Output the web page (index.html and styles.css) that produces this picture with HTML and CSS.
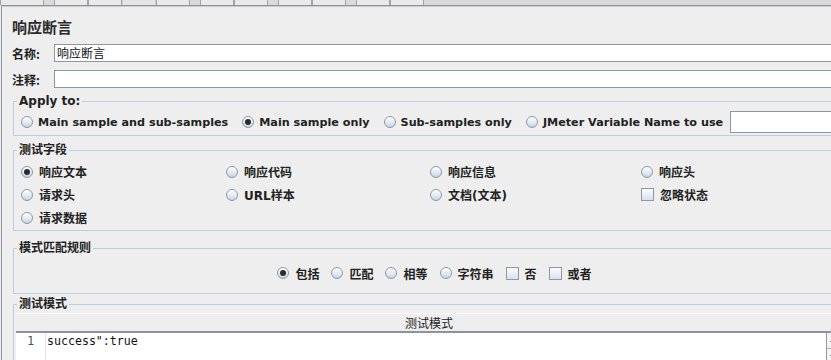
FILE: index.html
```html
<!DOCTYPE html>
<html lang="zh-CN">
<head>
    <meta charset="UTF-8">
    <title>响应断言</title>
    <link rel="stylesheet" href="styles.css">
</head>
<body>
    <div class="toolbar">
        <span class="tb-btn" style="width: 42px"></span>
        <span class="tb-gap"></span>
        <span class="tb-btn"></span><span class="tb-btn"></span><span class="tb-btn light"></span><span class="tb-btn"></span>
        <span class="tb-gap"></span>
        <span class="tb-btn"></span><span class="tb-btn"></span>
        <span class="tb-gap"></span>
        <span class="tb-btn"></span><span class="tb-btn"></span>
        <span class="tb-gap"></span>
        <span class="tb-btn"></span><span class="tb-btn"></span>
    </div>

    <div class="panel">
        <h1 class="title">响应断言</h1>

        <div class="field-row">
            <label class="field-label">名称:</label>
            <div class="text-input">响应断言</div>
        </div>
        <div class="field-row second">
            <label class="field-label">注释:</label>
            <div class="text-input"></div>
        </div>

        <fieldset class="group apply">
            <legend>Apply to:</legend>
            <div class="apply-row">
                <span class="option"><span class="radio"></span>Main sample and sub-samples</span>
                <span class="option"><span class="radio on"></span>Main sample only</span>
                <span class="option"><span class="radio"></span>Sub-samples only</span>
                <span class="option"><span class="radio"></span>JMeter Variable Name to use</span>
                <div class="text-input var-input"></div>
            </div>
        </fieldset>

        <fieldset class="group fields">
            <legend>测试字段</legend>
            <div class="field-grid">
                <span class="option"><span class="radio on"></span>响应文本</span>
                <span class="option"><span class="radio"></span>响应代码</span>
                <span class="option"><span class="radio"></span>响应信息</span>
                <span class="option"><span class="radio"></span>响应头</span>
                <span class="option"><span class="radio"></span>请求头</span>
                <span class="option"><span class="radio"></span>URL样本</span>
                <span class="option"><span class="radio"></span>文档(文本)</span>
                <span class="option"><span class="check"></span>忽略状态</span>
                <span class="option"><span class="radio"></span>请求数据</span>
            </div>
        </fieldset>

        <fieldset class="group rules">
            <legend>模式匹配规则</legend>
            <div class="rule-row">
                <span class="option"><span class="radio on"></span>包括</span>
                <span class="option"><span class="radio"></span>匹配</span>
                <span class="option"><span class="radio"></span>相等</span>
                <span class="option"><span class="radio"></span>字符串</span>
                <span class="option"><span class="check"></span>否</span>
                <span class="option"><span class="check"></span>或者</span>
            </div>
        </fieldset>

        <fieldset class="group patterns">
            <legend>测试模式</legend>
            <div class="table-head">测试模式</div>
            <div class="editor">
                <div class="gutter">1</div>
                <div class="code">success":true</div>
                <div class="scrollbar">
                    <span class="arrow up"></span>
                    <span class="arrow down"></span>
                </div>
            </div>
        </fieldset>
    </div>
</body>
</html>
```

FILE: styles.css
```css
body {
    margin: 0;
    width: 831px;
    height: 360px;
    overflow: hidden;
    background: #eeeeee;
    color: #222;
    font-family: "DejaVu Sans", "Noto Sans CJK SC", sans-serif;
    font-size: 12px;
}

/* strip of toolbar buttons cut off at the top */
.toolbar {
    display: flex;
    height: 5px;
    background: #d9d9d9;
    overflow: hidden;
}

.tb-btn {
    width: 32px;
    height: 8px;
    margin-top: -4px;
    border: 1px solid #a3a3a3;
    background: #e9e9e9;
}

.tb-btn.light {
    border-color: #d0d0d0;
    background: #e4e4e4;
}

.tb-gap {
    width: 10px;
}

.panel {
    width: 830px;
    margin-left: 1px;
    padding: 11px 0 0 10px;
    border-top: 1px solid #8a93a2;
    border-left: 1px solid #8a93a2;
    box-shadow: inset 0 1px 0 #c9cdd3;
}

.title {
    margin: 0;
    font-family: "Noto Sans CJK SC", sans-serif;
    font-size: 15px;
    line-height: 20px;
    font-weight: bold;
    color: #2a2a2a;
}

.field-row {
    display: flex;
    align-items: center;
    margin-top: 7px;
}

.field-row.second {
    margin-top: 8px;
}

.field-label {
    width: 42px;
    font-family: "Noto Sans CJK SC", sans-serif;
    font-weight: bold;
    font-size: 12px;
}

.text-input {
    flex: 1;
    height: 16px;
    padding-left: 2px;
    border: 1px solid #8d96a5;
    background: #fff;
    font-family: "Noto Sans CJK SC", sans-serif;
    font-size: 12px;
    line-height: 16px;
    color: #111;
}

.group {
    margin: 0 0 0 1px;
    padding: 0 0 0 7px;
    border: 1px solid #b9cde4;
    border-right: none;
    min-width: 0;
}

.group legend {
    margin-left: -4px;
    padding: 0 2px;
    font-family: "DejaVu Sans", "Noto Sans CJK SC", sans-serif;
    font-weight: bold;
    font-size: 12px;
    line-height: 14px;
    color: #222;
}

.option {
    display: flex;
    align-items: center;
    gap: 5px;
    font-family: "DejaVu Sans", "Noto Sans CJK SC", sans-serif;
    font-weight: bold;
    font-size: 12px;
    white-space: nowrap;
}

.radio {
    position: relative;
    width: 10px;
    height: 10px;
    border: 1px solid #8e98a6;
    border-radius: 50%;
    background: linear-gradient(#ffffff, #dfe7f1 60%, #c4d3e6);
    flex: none;
}

.radio.on::after {
    content: "";
    position: absolute;
    left: 2px;
    top: 2px;
    width: 6px;
    height: 6px;
    border-radius: 50%;
    background: #2b2b2b;
}

.check {
    width: 11px;
    height: 11px;
    border: 1px solid #8e98a6;
    background: linear-gradient(#fbfcfd, #d7e1ee);
    flex: none;
}

/* Apply to */
.apply {
    margin-top: 6px;
    padding-bottom: 2px;
}

.apply-row {
    display: flex;
    align-items: center;
    height: 22px;
    margin-top: 3px;
    gap: 14px;
}

.apply-row .option {
    font-size: 11.2px;
}

.var-input {
    margin-left: -7px;
    height: 20px;
}

/* 测试字段 */
.fields {
    margin-top: 7px;
    padding-bottom: 1px;
}

.field-grid {
    display: grid;
    grid-template-columns: 205px 204px 211px 1fr;
    grid-auto-rows: 23px;
    align-items: center;
    margin-top: 3px;
}

.field-grid .option {
    gap: 6px;
}

/* 模式匹配规则 */
.rules {
    margin-top: 10px;
    padding-bottom: 10px;
}

.rule-row {
    display: flex;
    justify-content: center;
    align-items: center;
    gap: 12px;
    height: 20px;
    margin-top: 8px;
    padding-left: 6px;
}

.rule-row .option {
    gap: 6px;
}

/* 测试模式 */
.patterns {
    margin-top: 3px;
    padding-left: 2px;
}

.patterns legend {
    margin-left: 1px;
}

.table-head {
    margin-top: 2px;
    height: 17px;
    border-top: 1px solid #fff;
    border-bottom: 2px solid #8a93a2;
    text-align: center;
    font-family: "Noto Sans CJK SC", sans-serif;
    font-size: 12px;
    line-height: 17px;
    color: #222;
}

.editor {
    display: flex;
    height: 40px;
    background: #fff;
}

.gutter {
    width: 29px;
    border-right: 1px solid #e3e3e3;
    text-align: center;
    font-family: "DejaVu Sans Mono", monospace;
    font-size: 12px;
    line-height: 16px;
    color: #555;
}

.code {
    flex: 1;
    padding-left: 1px;
    font-family: "DejaVu Sans Mono", monospace;
    font-size: 11.6px;
    line-height: 16px;
    color: #111;
}

.scrollbar {
    display: flex;
    flex-direction: column;
    width: 15px;
    border-left: 1px solid #9a9a9a;
    background: #f4f4f4;
}

.arrow {
    position: relative;
    height: 15px;
    border-bottom: 1px solid #b0b0b0;
}

.arrow::after {
    content: "";
    position: absolute;
    left: 3px;
    top: 6px;
    border-left: 3px solid transparent;
    border-right: 3px solid transparent;
}

.arrow.up::after {
    border-bottom: 3px solid #111;
}

.arrow.down::after {
    border-top: 3px solid #111;
}
```
